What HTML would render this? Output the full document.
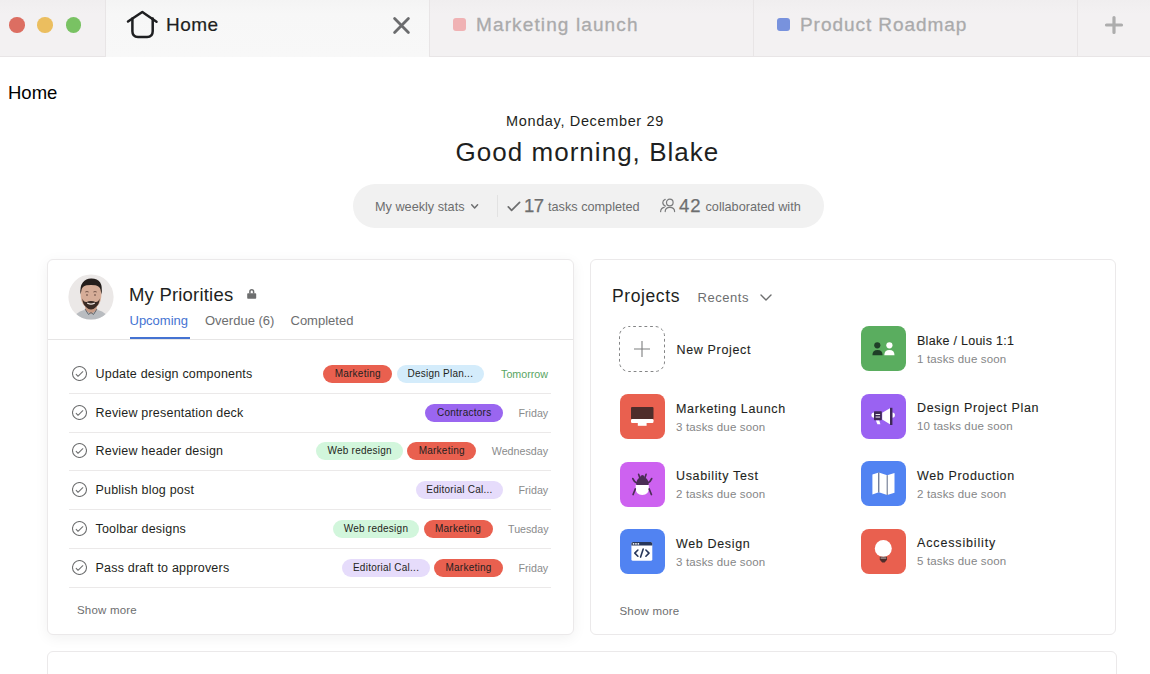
<!DOCTYPE html>
<html><head><meta charset="utf-8">
<style>
*{margin:0;padding:0;box-sizing:border-box}
html,body{width:1150px;height:674px;overflow:hidden;background:#fff;font-family:"Liberation Sans",sans-serif;color:#1e1f21}
.abs{position:absolute}
.t{position:absolute;white-space:nowrap;line-height:1}
/* tab bar */
#tabbar{position:absolute;left:0;top:0;width:1150px;height:57px;background:linear-gradient(#f0eeef 0,#f3f1f2 14px);border-bottom:1px solid #e8e5e6}
.tl{position:absolute;top:17px;width:15.5px;height:15.5px;border-radius:50%}
.sep{position:absolute;top:0;width:1px;height:57px;background:#e8e5e6}
#hometab{position:absolute;left:106px;top:0;width:323px;height:57px;background:linear-gradient(#f4f4f4 0,#f7f7f7 14px,#f8f8f8 57px)}
.sq{position:absolute;top:18px;width:13px;height:13px;border-radius:3px}
.tabtxt{font-size:19px;color:#aaaaab;letter-spacing:0.95px;-webkit-text-stroke:0.3px #aaaaab}
/* cards */
.card{position:absolute;background:#fff;border:1px solid #ebe9ea;border-radius:6px}
.row{position:absolute;left:69px;width:482px;height:39px;border-bottom:1px solid #ebe9e9}
.chk{position:absolute;left:2.9px;top:10.9px;width:15px;height:15px}
.rtxt{position:absolute;left:26.5px;top:13.4px;font-size:12.5px;letter-spacing:0.2px;color:#1e1f21;line-height:1;white-space:nowrap}
.rright{position:absolute;right:3px;top:9.5px;height:18px;display:flex;align-items:center}
.pill{height:18px;border-radius:9px;font-size:10px;letter-spacing:0.25px;line-height:18px;margin-left:4.3px;color:#1e1f21;white-space:nowrap;text-align:center;overflow:hidden}
.date{font-size:10.7px;margin-left:15.5px;line-height:18px;white-space:nowrap}
.pico{position:absolute;width:45px;height:45px;border-radius:8px}
.pname{font-size:12.5px;letter-spacing:0.65px;color:#1e1f21;-webkit-text-stroke:0.1px #1e1f21}
.psub{font-size:11.5px;letter-spacing:0.15px;color:#858687}
</style></head>
<body>
<div id="tabbar">
  <div class="tl" style="left:9px;background:#dc6e62"></div>
  <div class="tl" style="left:37.2px;background:#ebbe5f"></div>
  <div class="tl" style="left:65.7px;background:#79c263"></div>
  <div class="sep" style="left:105px"></div>
  <div id="hometab"></div>
  <div class="sep" style="left:429px"></div>
  <div class="sep" style="left:753px"></div>
  <div class="sep" style="left:1077px"></div>
  <!-- home icon -->
  <svg class="abs" style="left:122px;top:6px" width="40" height="36" viewBox="0 0 40 36">
    <path d="M6 15.5 L20.3 6 L34.5 15.7" fill="none" stroke="#1e1f21" stroke-width="2.5" stroke-linecap="round" stroke-linejoin="round"/>
    <path d="M10.4 12.6 V25.3 Q10.4 31 16 31 H25.1 Q30.7 31 30.7 25.3 V12.6" fill="none" stroke="#1e1f21" stroke-width="2.5" stroke-linecap="round" stroke-linejoin="round"/>
  </svg>
  <div class="t" style="left:166px;top:15px;font-size:19px;color:#1e1f21;letter-spacing:0.5px;-webkit-text-stroke:0.2px #1e1f21">Home</div>
  <svg class="abs" style="left:392px;top:16px" width="19" height="19" viewBox="0 0 19 19">
    <path d="M2.6 2.6 L16.4 16.4 M16.4 2.6 L2.6 16.4" stroke="#6b6c6e" stroke-width="2.8" stroke-linecap="round"/>
  </svg>
  <div class="sq" style="left:453px;background:#f0b2b4"></div>
  <div class="t tabtxt" style="left:476px;top:15px;letter-spacing:1.12px">Marketing launch</div>
  <div class="sq" style="left:777px;background:#7892dd"></div>
  <div class="t tabtxt" style="left:800px;top:15px">Product Roadmap</div>
  <svg class="abs" style="left:1104px;top:15px" width="20" height="20" viewBox="0 0 20 20">
    <path d="M10 2.5 V17.5 M2.5 10 H17.5" stroke="#adadad" stroke-width="3.2" stroke-linecap="round"/>
  </svg>
</div>

<div class="t" style="left:8px;top:84px;font-size:18.5px;color:#000">Home</div>
<div class="t" style="left:506px;top:113.5px;font-size:14.5px;letter-spacing:0.65px;color:#1e1f21">Monday, December 29</div>
<div class="t" style="left:455.5px;top:139px;font-size:26px;letter-spacing:1.03px;color:#1e1f21">Good morning, Blake</div>

<!-- stats pill -->
<div class="abs" style="left:353px;top:184px;width:471px;height:44px;border-radius:22px;background:#f1f1f1"></div>
<div class="t" style="left:375px;top:200.5px;font-size:12.7px;color:#6d6e6f">My weekly stats</div>
<svg class="abs" style="left:469px;top:202px" width="11" height="8" viewBox="0 0 11 8"><path d="M2.7 2.7 L5.65 5.9 L8.6 2.7" fill="none" stroke="#6d6e6f" stroke-width="1.5" stroke-linecap="round" stroke-linejoin="round"/></svg>
<div class="abs" style="left:496.5px;top:195px;width:1px;height:21.5px;background:#e2e2e2"></div>
<svg class="abs" style="left:506px;top:200px" width="16" height="13" viewBox="0 0 16 13"><path d="M2.3 6.8 L5.6 10.3 L13.6 2.3" fill="none" stroke="#6d6e6f" stroke-width="1.7" stroke-linecap="round" stroke-linejoin="round"/></svg>
<div class="t" style="left:524px;top:197px;font-size:18.5px;color:#6d6e6f;letter-spacing:-0.5px;-webkit-text-stroke:0.25px #6d6e6f">17</div>
<div class="t" style="left:548px;top:200.5px;font-size:12.7px;color:#6d6e6f">tasks completed</div>
<svg class="abs" style="left:658px;top:196px" width="19" height="17" viewBox="0 0 19 17">
  <circle cx="11.8" cy="6.5" r="3.3" fill="none" stroke="#7a7b7c" stroke-width="1.2"/>
  <path d="M7.2 15.6 Q7.2 11.3 11.8 11.3 Q16.6 11.3 16.6 15.6" fill="none" stroke="#7a7b7c" stroke-width="1.2" stroke-linecap="round"/>
  <path d="M7.2 3.4 Q4.8 4.3 4.8 6.6 Q4.8 9.2 7.4 10.1" fill="none" stroke="#7a7b7c" stroke-width="1.2" stroke-linecap="round"/>
  <path d="M2.6 15.6 Q2.8 11.8 6.2 11.3" fill="none" stroke="#7a7b7c" stroke-width="1.2" stroke-linecap="round"/>
</svg>
<div class="t" style="left:679px;top:197px;font-size:18.5px;color:#6d6e6f;letter-spacing:0.9px;-webkit-text-stroke:0.25px #6d6e6f">42</div>
<div class="t" style="left:705.5px;top:200.5px;font-size:12.7px;color:#6d6e6f">collaborated with</div>

<!-- priorities card -->
<div class="card" style="left:47px;top:259px;width:527px;height:376px;box-shadow:0 3px 14px rgba(0,0,0,0.06)">
</div>
<!-- avatar -->
<svg class="abs" style="left:68px;top:273.5px" width="46" height="46" viewBox="0 0 46 46">
  <defs><clipPath id="avc"><circle cx="23" cy="23" r="22.6"/></clipPath></defs>
  <g clip-path="url(#avc)">
    <rect width="46" height="46" fill="#ebe8e7"/>
    <path d="M5 46 Q7 38.5 16 36 L23 39 L30 36 Q39 38.5 41 46 Z" fill="#b9bcc0"/>
    <path d="M17 31 L17.5 36.5 L23 40 L28.5 36.5 L29 31 Z" fill="#c89c86"/>
    <path d="M12.6 19 Q12.2 9 23 8.8 Q33.8 9 33.4 19 Q33.6 28 29.5 32 Q26.5 34.6 23 34.6 Q19.5 34.6 16.5 32 Q12.4 28 12.6 19 Z" fill="#d6ad98"/>
    <path d="M12.6 20.5 Q11.6 12.5 14.8 8.6 Q18 4.2 23.5 4.4 Q29.5 4.4 32.2 8.6 Q34.6 12.5 33.5 20.5 L32.4 15 Q30.8 11.6 27.4 11.2 Q23 10.6 18.6 11.2 Q15.2 11.6 13.7 15 Z" fill="#241e1c"/>
    <path d="M14.2 24.5 Q14.8 30.5 18 33 Q20.5 35.5 23 35.6 Q25.5 35.5 28 33 Q31.2 30.5 31.8 24.5 Q30 28.5 27.4 28 Q25.2 26.8 23 27 Q20.8 26.8 18.6 28 Q16 28.5 14.2 24.5 Z" fill="#3a2b25"/>
    <path d="M19.6 29.2 Q23 31 26.4 29.2" fill="none" stroke="#eee3dd" stroke-width="1.2" stroke-linecap="round"/>
    <path d="M17.3 18 Q19 17 20.6 18 M25.4 18 Q27 17 28.7 18" fill="none" stroke="#6b4f44" stroke-width="0.9"/>
    <path d="M18 21 H20 M26 21 H28" stroke="#5a4038" stroke-width="0.9"/>
    <path d="M17 35 L20.5 40.5 L23 38.5 L25.5 40.5 L29 35" fill="none" stroke="#62666b" stroke-width="1"/>
  </g>
</svg>
<div class="t" style="left:129px;top:286px;font-size:18.5px;letter-spacing:0.2px;color:#1e1f21">My Priorities</div>
<svg class="abs" style="left:245px;top:287px" width="13" height="13" viewBox="0 0 13 13">
  <path d="M4.9 6.5 V4.7 Q4.9 2.65 6.75 2.65 Q8.6 2.65 8.6 4.7 V6.5" fill="none" stroke="#6d6e6f" stroke-width="1.5"/>
  <rect x="2.2" y="6.2" width="9" height="5.5" rx="0.8" fill="#6d6e6f"/>
</svg>
<div class="t" style="left:129.5px;top:314px;font-size:13px;color:#4573d2">Upcoming</div>
<div class="abs" style="left:129.5px;top:337px;width:60.5px;height:2px;background:#4573d2"></div>
<div class="t" style="left:205px;top:314px;font-size:13px;color:#6d6e6f">Overdue (6)</div>
<div class="t" style="left:290.5px;top:314px;font-size:13px;color:#6d6e6f">Completed</div>
<div class="abs" style="left:48px;top:339px;width:525px;height:1px;background:#e6e5e5"></div>

<!--ROWS-->
<div class="row" style="top:355px">
  <svg class="chk" viewBox="0 0 15 15"><circle cx="7.5" cy="7.5" r="7" fill="none" stroke="#6d6e6f" stroke-width="1.05"/><path d="M4.2 8.4 L6 10.3 L10.8 5.7" fill="none" stroke="#6d6e6f" stroke-width="1.05" stroke-linecap="round" stroke-linejoin="round"/></svg>
  <div class="rtxt">Update design components</div>
  <div class="rright"><div class="pill" style="width:69px;background:#e9604f">Marketing</div><div class="pill" style="width:87.6px;background:#d4ecfb">Design Plan...</div><div class="date" style="color:#58a563;width:48.4px;text-align:right">Tomorrow</div></div>
</div>
<div class="row" style="top:394px">
  <svg class="chk" viewBox="0 0 15 15"><circle cx="7.5" cy="7.5" r="7" fill="none" stroke="#6d6e6f" stroke-width="1.05"/><path d="M4.2 8.4 L6 10.3 L10.8 5.7" fill="none" stroke="#6d6e6f" stroke-width="1.05" stroke-linecap="round" stroke-linejoin="round"/></svg>
  <div class="rtxt">Review presentation deck</div>
  <div class="rright"><div class="pill" style="width:77.6px;background:#9a66f0">Contractors</div><div class="date" style="color:#8a8b8c;width:29.5px;text-align:right">Friday</div></div>
</div>
<div class="row" style="top:432px">
  <svg class="chk" viewBox="0 0 15 15"><circle cx="7.5" cy="7.5" r="7" fill="none" stroke="#6d6e6f" stroke-width="1.05"/><path d="M4.2 8.4 L6 10.3 L10.8 5.7" fill="none" stroke="#6d6e6f" stroke-width="1.05" stroke-linecap="round" stroke-linejoin="round"/></svg>
  <div class="rtxt">Review header design</div>
  <div class="rright"><div class="pill" style="width:86.5px;background:#d2f6dc">Web redesign</div><div class="pill" style="width:69px;background:#e9604f">Marketing</div><div class="date" style="color:#8a8b8c;width:56.3px;text-align:right">Wednesday</div></div>
</div>
<div class="row" style="top:471px">
  <svg class="chk" viewBox="0 0 15 15"><circle cx="7.5" cy="7.5" r="7" fill="none" stroke="#6d6e6f" stroke-width="1.05"/><path d="M4.2 8.4 L6 10.3 L10.8 5.7" fill="none" stroke="#6d6e6f" stroke-width="1.05" stroke-linecap="round" stroke-linejoin="round"/></svg>
  <div class="rtxt">Publish blog post</div>
  <div class="rright"><div class="pill" style="width:87.2px;background:#e6dcfb">Editorial Cal...</div><div class="date" style="color:#8a8b8c;width:29.5px;text-align:right">Friday</div></div>
</div>
<div class="row" style="top:510px">
  <svg class="chk" viewBox="0 0 15 15"><circle cx="7.5" cy="7.5" r="7" fill="none" stroke="#6d6e6f" stroke-width="1.05"/><path d="M4.2 8.4 L6 10.3 L10.8 5.7" fill="none" stroke="#6d6e6f" stroke-width="1.05" stroke-linecap="round" stroke-linejoin="round"/></svg>
  <div class="rtxt">Toolbar designs</div>
  <div class="rright"><div class="pill" style="width:86.5px;background:#d2f6dc">Web redesign</div><div class="pill" style="width:69px;background:#e9604f">Marketing</div><div class="date" style="color:#8a8b8c;width:40px;text-align:right">Tuesday</div></div>
</div>
<div class="row" style="top:549px">
  <svg class="chk" viewBox="0 0 15 15"><circle cx="7.5" cy="7.5" r="7" fill="none" stroke="#6d6e6f" stroke-width="1.05"/><path d="M4.2 8.4 L6 10.3 L10.8 5.7" fill="none" stroke="#6d6e6f" stroke-width="1.05" stroke-linecap="round" stroke-linejoin="round"/></svg>
  <div class="rtxt">Pass draft to approvers</div>
  <div class="rright"><div class="pill" style="width:87.3px;background:#e6dcfb">Editorial Cal...</div><div class="pill" style="width:69px;background:#e9604f">Marketing</div><div class="date" style="color:#8a8b8c;width:29.5px;text-align:right">Friday</div></div>
</div>

<!--/ROWS-->
<div class="t" style="left:77px;top:604.5px;font-size:11.5px;letter-spacing:0.2px;color:#6d6e6f">Show more</div>
<!--PROJ-->
<div class="card" style="left:590px;top:259px;width:526px;height:376px"></div>
<div class="t" style="left:612px;top:287.5px;font-size:17.5px;letter-spacing:0.6px;color:#1e1f21">Projects</div>
<div class="t" style="left:697.5px;top:291px;font-size:13px;letter-spacing:0.55px;color:#6d6e6f">Recents</div>
<svg class="abs" style="left:759px;top:293px" width="14" height="9" viewBox="0 0 14 9"><path d="M2 2 L7 7 L12 2" fill="none" stroke="#6d6e6f" stroke-width="1.4" stroke-linecap="round" stroke-linejoin="round"/></svg>
<svg class="abs" style="left:619.0px;top:326px" width="46" height="46" viewBox="0 0 46 46"><rect x="0.5" y="0.5" width="45" height="45" rx="9.5" fill="none" stroke="#848586" stroke-width="1" stroke-dasharray="2.8 2.85" stroke-dashoffset="1.5"/><path d="M23 15 V31 M15 23 H31" stroke="#7d7e7f" stroke-width="1.1"/></svg>
<div class="t pname" style="left:676.5px;top:343.5px">New Project</div>
<svg class="abs" style="left:860.5px;top:326px" width="45" height="45" viewBox="0 0 45 45"><rect width="45" height="45" rx="8" fill="#5aad5f"/><circle cx="16.3" cy="19.3" r="3.1" fill="#1f3f28"/><path d="M11.4 29.2 Q11.4 23.9 16.5 23.9 Q21.6 23.9 21.6 29.2 Z" fill="#1f3f28"/><circle cx="28.4" cy="19.3" r="3.1" fill="#fff"/><path d="M23.3 29.2 Q23.3 23.9 28.4 23.9 Q33.5 23.9 33.5 29.2 Z" fill="#fff"/></svg>
<div class="t pname" style="left:917.0px;top:334.8px;letter-spacing:0.28px;">Blake / Louis 1:1</div>
<div class="t psub" style="left:917.0px;top:353.5px">1 tasks due soon</div>
<svg class="abs" style="left:619.5px;top:394px" width="45" height="45" viewBox="0 0 45 45"><rect width="45" height="45" rx="8" fill="#e9604f"/><rect x="11" y="13" width="22.5" height="12.5" rx="1" fill="#4e2d2b"/><rect x="11" y="25" width="22.5" height="4" rx="1.2" fill="#fff"/><rect x="17.8" y="28.5" width="8.8" height="3.3" fill="#fff"/></svg>
<div class="t pname" style="left:676.0px;top:402.8px;">Marketing Launch</div>
<div class="t psub" style="left:676.0px;top:421.5px">3 tasks due soon</div>
<svg class="abs" style="left:860.5px;top:393.5px" width="45" height="45" viewBox="0 0 45 45"><rect width="45" height="45" rx="8" fill="#9a62f2"/><g transform="translate(0,-0.7)"><path d="M13 19.2 A2.6 2.6 0 0 0 13 24.4 Z" fill="#fff"/><path d="M31.3 19.2 A2.6 2.6 0 0 1 31.3 24.4 Z" fill="#fff"/><rect x="13" y="18" width="7.8" height="8.9" rx="0.6" fill="#3e2a55"/><rect x="14.6" y="20.7" width="4.5" height="0.9" fill="#fff"/><rect x="14.6" y="23.3" width="4.5" height="0.9" fill="#fff"/><path d="M21.2 19.5 L29 15 V31 L21.2 26.3 Z" fill="#fff"/><rect x="29" y="14.5" width="2.4" height="17.2" fill="#3e2a55"/><path d="M14.9 27.3 H18.3 L19.4 30.9 H16.4 Z" fill="#fff"/></g></svg>
<div class="t pname" style="left:917.0px;top:402.3px;">Design Project Plan</div>
<div class="t psub" style="left:917.0px;top:421.0px">10 tasks due soon</div>
<svg class="abs" style="left:619.5px;top:461.5px" width="45" height="45" viewBox="0 0 45 45"><rect width="45" height="45" rx="8" fill="#cd62f0"/><path d="M16.3 23 Q16.3 17 20 15.6 Q20.2 13.2 22.4 13.1 Q24.6 13.2 24.8 15.6 Q28.6 17 28.6 23 Z" fill="#4b2d55"/><path d="M19.6 15.2 L18.6 12.2 M25.2 15.2 L26.1 12.2" stroke="#4b2d55" stroke-width="1.6" stroke-linecap="round"/><path d="M15.7 23.1 H28.8 V26.6 Q28.8 33.1 22.25 33.1 Q15.7 33.1 15.7 26.6 Z" fill="#fff"/><path d="M16.8 21 Q14 19.6 12.8 16.6 M27.7 21 Q30.5 19.6 31.7 16.6" fill="none" stroke="#4b2d55" stroke-width="1.7" stroke-linecap="round"/><path d="M15.3 27 L13.1 32.5 M29.2 27 L31.4 32.5" stroke="#4b2d55" stroke-width="1.7" stroke-linecap="round"/></svg>
<div class="t pname" style="left:676.0px;top:470.3px;">Usability Test</div>
<div class="t psub" style="left:676.0px;top:489.0px">2 tasks due soon</div>
<svg class="abs" style="left:860.5px;top:461px" width="45" height="45" viewBox="0 0 45 45"><rect width="45" height="45" rx="8" fill="#5183f2"/><path d="M11.4 13.6 L17.8 11.5 L26.2 14.2 L33.5 12 V31.8 L26.2 34 L17.8 31.3 L11.4 33.5 Z" fill="#fff"/><path d="M17.8 11.5 V31.3" stroke="#3c4b6e" stroke-width="1"/><path d="M26.2 14.2 V34" stroke="#5f6a86" stroke-width="1"/></svg>
<div class="t pname" style="left:917.0px;top:469.8px;">Web Production</div>
<div class="t psub" style="left:917.0px;top:488.5px">2 tasks due soon</div>
<svg class="abs" style="left:619.5px;top:529px" width="45" height="45" viewBox="0 0 45 45"><rect width="45" height="45" rx="8" fill="#5183f2"/><g transform="translate(-0.4,0)"><rect x="11.8" y="13" width="20.9" height="18.8" rx="1.6" fill="#fff"/><path d="M11.8 14.6 Q11.8 13 13.4 13 H31.1 Q32.7 13 32.7 14.6 V16.5 H11.8 Z" fill="#28375a"/><rect x="13.2" y="14.1" width="1.5" height="1.5" fill="#fff"/><rect x="15.6" y="14.1" width="1.5" height="1.5" fill="#fff"/><rect x="18" y="14.1" width="1.5" height="1.5" fill="#fff"/><path d="M18.3 21 L15.2 24.1 L18.3 27.2 M26.3 21 L29.4 24.1 L26.3 27.2 M23.6 20.1 L21 28.1" fill="none" stroke="#28375a" stroke-width="1.6" stroke-linecap="round" stroke-linejoin="round"/></g></svg>
<div class="t pname" style="left:676.0px;top:537.8px;">Web Design</div>
<div class="t psub" style="left:676.0px;top:556.5px">3 tasks due soon</div>
<svg class="abs" style="left:860.5px;top:528.5px" width="45" height="45" viewBox="0 0 45 45"><rect width="45" height="45" rx="8" fill="#e9604f"/><circle cx="22.3" cy="19.6" r="8.5" fill="#fff"/><path d="M18.8 27.8 H26 V30.8 L23.6 33.6 H21.2 L18.8 30.8 Z" fill="#4e2d2b"/><rect x="19.6" y="28.6" width="5.6" height="0.9" fill="#cfc6c6"/></svg>
<div class="t pname" style="left:917.0px;top:537.3px;letter-spacing:0.85px;">Accessibility</div>
<div class="t psub" style="left:917.0px;top:556.0px">5 tasks due soon</div>

<div class="t" style="left:619.5px;top:606px;font-size:11.5px;letter-spacing:0.2px;color:#6d6e6f">Show more</div>
<!--/PROJ-->
<div class="card" style="left:47px;top:651px;width:1070px;height:60px"></div>
</body></html>
